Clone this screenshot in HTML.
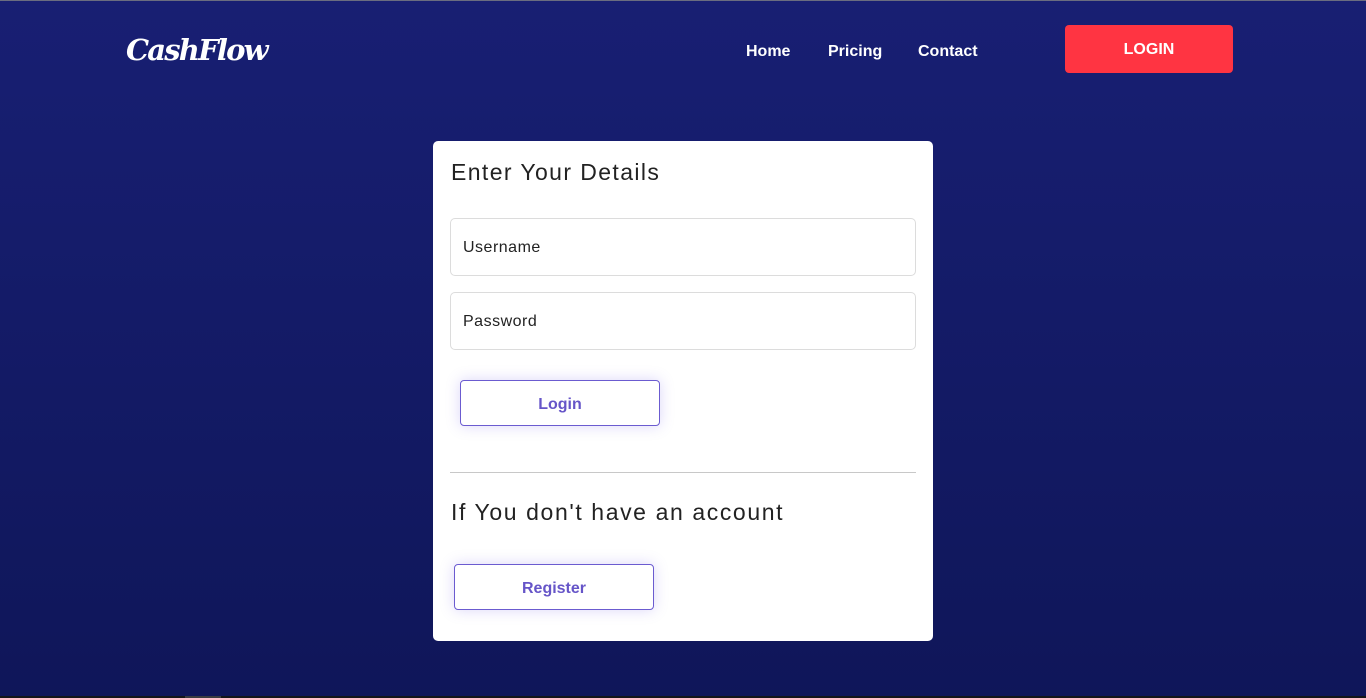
<!DOCTYPE html>
<html><head><style>
*{margin:0;padding:0;box-sizing:border-box}
body{width:1366px;height:698px;overflow:hidden;font-family:"Liberation Sans",sans-serif;background:linear-gradient(#181f73,#0f1659);position:relative;border-top:1px solid #6a6d80}
.logo{position:absolute;left:126px;top:32px;color:#fff;font:italic bold 29px "DejaVu Serif","Liberation Serif",serif;letter-spacing:-1.8px}
.nav a{position:absolute;top:42px;color:#fff;font-weight:bold;font-size:16px;text-decoration:none}
.lb{position:absolute;left:1065px;top:24px;width:168px;height:48px;background:#ff3442;border-radius:4px;color:#fff;font-weight:bold;font-size:16px;text-align:center;line-height:50px}
.card{position:absolute;left:433px;top:140px;width:500px;height:500px;background:#fff;border-radius:5px}
h2{position:absolute;left:18px;font-weight:normal;font-size:23px;color:#222;letter-spacing:1.4px}
.inp{position:absolute;left:17px;width:466px;height:58px;border:1px solid #dcdcdc;border-radius:5px;font-size:16px;color:#222;padding-left:12px;line-height:58px;letter-spacing:.5px}
.btn{position:absolute;width:200px;height:46px;border:1px solid #6b5bd0;border-radius:4px;color:#6655c8;font-weight:bold;font-size:16px;text-align:center;line-height:48px;box-shadow:0 0 14px rgba(110,90,230,.25)}
hr{position:absolute;left:17px;top:331px;width:466px;border:0;border-top:1px solid #c8c8c8}
.bot{position:absolute;left:0;bottom:0;width:1366px;height:2px;background:#141519}
.bot i{position:absolute;left:185px;width:36px;height:2px;background:#3a3b40}
</style></head><body>
<div class="logo">CashFlow</div>
<div class="nav"><a style="left:746px">Home</a><a style="left:828px">Pricing</a><a style="left:918px">Contact</a></div>
<div class="lb">LOGIN</div>
<div class="card">
<h2 style="top:18px">Enter Your Details</h2>
<div class="inp" style="top:77px">Username</div>
<div class="inp" style="top:151px">Password</div>
<div class="btn" style="left:27px;top:239px">Login</div>
<hr>
<h2 style="top:358px;letter-spacing:1.6px">If You don't have an account</h2>
<div class="btn" style="left:21px;top:423px">Register</div>
</div>
<div class="bot"><i></i></div>
</body></html>
